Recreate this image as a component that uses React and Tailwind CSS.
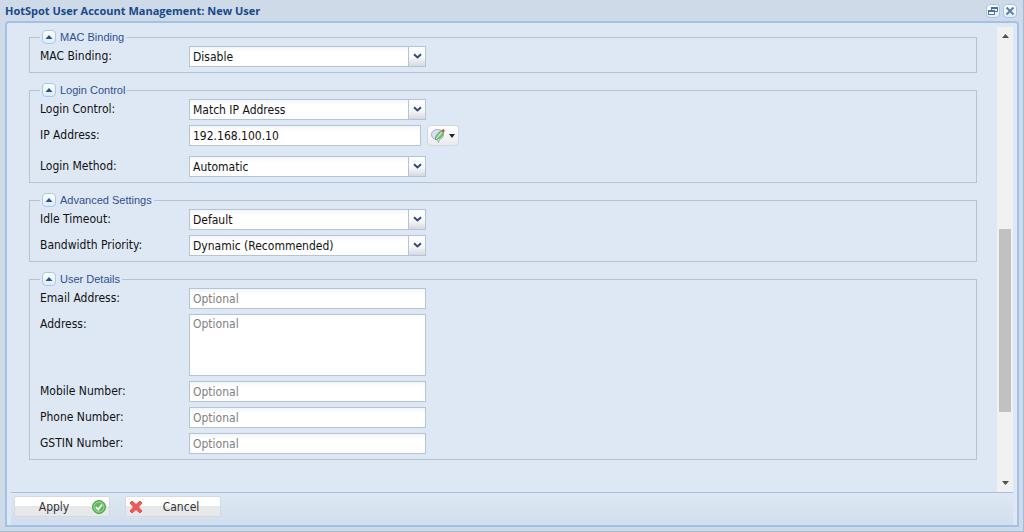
import React from "react";

const SECTION_OPTIONS = {
  binding: ["Disable", "Enable"],
  control: ["Match IP Address", "Any"],
  method: ["Automatic", "Manual"],
  timeout: ["Default", "Custom"],
  priority: ["Dynamic (Recommended)", "High", "Low"],
};

const fieldClass =
  "block h-[21px] border border-[#b5c3d8] bg-white bg-gradient-to-b from-[#f3f6f8] to-white to-30% px-[3px] pt-px text-xs leading-4 text-[#111] placeholder:text-[#808080] outline-none focus:border-[#7eadd9]";

const Section = ({ title, children }) => {
  const [open, setOpen] = React.useState(true);

  return (
    <fieldset className="min-w-0 border border-[#b5c3d4] px-[10px] pb-[5px]">
      <legend className="flex h-[14px] items-center gap-1 px-[2px] font-['Liberation_Sans',Arial,sans-serif] text-[11px] leading-[14px] text-[#2f4f94]">
        <button
          type="button"
          aria-expanded={open}
          aria-label={`Toggle ${title}`}
          onClick={() => setOpen((value) => !value)}
          className="flex h-[14px] w-[14px] items-center justify-center rounded-sm border border-[#a9c9ea] bg-gradient-to-b from-white to-[#dcebfa]"
        >
          <svg className={`h-1 w-2 ${open ? "" : "rotate-180"}`} viewBox="0 0 8 4">
            <path d="M4 0 7.5 4h-7z" fill="#28508c" />
          </svg>
        </button>
        {title}
      </legend>
      {open && <div className="flex flex-col gap-[5px] pt-[2px]">{children}</div>}
    </fieldset>
  );
};

const Row = ({ id, label, children }) => (
  <div className="flex items-start">
    <label htmlFor={id} className="w-[149px] shrink-0 pt-[2px] text-xs leading-4 text-[#111]">
      {label}:
    </label>
    {children}
  </div>
);

const SelectRow = ({ id, label, options }) => (
  <Row id={id} label={label}>
    <div className="relative w-[237px]">
      <select id={id} className={`${fieldClass} w-full appearance-none pr-5`}>
        {options.map((option) => (
          <option key={option}>{option}</option>
        ))}
      </select>
      <span className="pointer-events-none absolute inset-y-0 right-0 flex w-[18px] justify-center border border-[#b5c3d8] bg-gradient-to-b from-[#fbfcfd] from-50% to-[#d5dae0] pt-[6px]">
        <svg className="h-[6px] w-[9px]" viewBox="0 0 9 6">
          <path d="M1 1.2 4.5 4.4 8 1.2" fill="none" stroke="#2f4a78" strokeWidth="2" />
        </svg>
      </span>
    </div>
  </Row>
);

const TextRow = ({ id, label }) => (
  <Row id={id} label={label}>
    <input id={id} type="text" placeholder="Optional" className={`${fieldClass} w-[237px]`} />
  </Row>
);

const toolClass =
  "flex h-[14px] w-[14px] items-center justify-center rounded-sm border border-[#a9c5e6] bg-gradient-to-b from-white to-[#e3eefa]";

const footerButtonClass =
  "flex h-[21px] w-24 items-center rounded-xs border border-[#d4dae2] bg-linear-to-b from-white from-50% to-[#e6e8ea] to-50% px-[2px] text-xs leading-4 text-[#333]";

const App = () => {
  const scrollRef = React.useRef(null);

  const scrollBy = (top) => scrollRef.current?.scrollBy({ top });

  return (
    <div className="flex min-h-screen flex-col border-r border-b border-[#a3bbdb] bg-[#cedae8] pr-1 pb-1 pl-[5px] font-['DejaVu_Sans_Condensed','DejaVu_Sans',sans-serif]">
      <header className="flex h-[21px] items-center justify-between pr-[2px]">
        <h1 className="font-['Open_Sans',sans-serif] text-[11px] leading-4 font-bold text-[#15498b]">
          HotSpot User Account Management: New User
        </h1>
        <div className="flex gap-[3px]">
          <button type="button" aria-label="Restore" className={toolClass}>
            <svg className="h-3 w-3" viewBox="0 0 12 12" fill="none" stroke="#4672ab">
              <path d="M4.5 5V2.5h6v4H8" />
              <path d="M4 3h7" strokeWidth="2" />
              <path d="M1.500 5.500h6v4h-6z" fill="#fff" />
              <path d="M1 6h7" strokeWidth="2" />
            </svg>
          </button>
          <button type="button" aria-label="Close" className={toolClass}>
            <svg className="h-[10px] w-[10px]" viewBox="0 0 10 10">
              <path d="M1.5 1.5l7 7M8.5 1.5l-7 7" stroke="#5a7fb2" strokeWidth="2" />
            </svg>
          </button>
        </div>
      </header>

      <main className="flex flex-1 flex-col rounded-t-sm border-2 border-[#a3c0e6] bg-[#dee8f4] px-1 pt-1">
        <div className="flex flex-1">
          <div ref={scrollRef} className="flex flex-1 flex-col gap-[10px] pt-[3px] pr-5 pl-[18px]">
            <Section title="MAC Binding">
              <SelectRow id="mac-binding" label="MAC Binding" options={SECTION_OPTIONS.binding} />
            </Section>

            <Section title="Login Control">
              <SelectRow id="login-control" label="Login Control" options={SECTION_OPTIONS.control} />
              <Row id="ip-address" label="IP Address">
                <input
                  id="ip-address"
                  type="text"
                  defaultValue="192.168.100.10"
                  className={`${fieldClass} mb-[5px] w-[232px]`}
                />
                <button
                  type="button"
                  aria-label="IP address options"
                  className="ml-[6px] flex h-[21px] w-8 items-center justify-center gap-[3px] rounded-sm border border-[#d3d8df] bg-gradient-to-b from-white to-[#ebebed] pr-[2px]"
                >
                  <svg className="h-4 w-4" viewBox="0 0 16 16">
                    <path
                      d="M7.500 1.500C11 1.500 13.500 3.500 13.500 6.500S11.500 11 9.500 11.300L8.500 14.500 6.500 11.300C3.500 11 1.500 9.300 1.500 6.500S4 1.500 7.500 1.500z"
                      fill="#dcdff2"
                      stroke="#a3a8c8"
                    />
                    <path d="M5.500 11.500C5.500 8 7.500 5 12 2.500l1.500 1.500C13 8 10 10.500 5.500 11.500z" fill="#7fce78" stroke="#4d9d58" />
                    <path d="M6 11 12 4" stroke="#e4f6df" />
                    <path d="M11.500 2.500 13.500 1l1.500 1.500-1.500 2z" fill="#d8503f" />
                  </svg>
                  <svg className="h-1 w-[6px]" viewBox="0 0 6 4">
                    <path d="M0 0h6L3 4z" fill="#222" />
                  </svg>
                </button>
              </Row>
              <SelectRow id="login-method" label="Login Method" options={SECTION_OPTIONS.method} />
            </Section>

            <Section title="Advanced Settings">
              <SelectRow id="idle-timeout" label="Idle Timeout" options={SECTION_OPTIONS.timeout} />
              <SelectRow id="priority" label="Bandwidth Priority" options={SECTION_OPTIONS.priority} />
            </Section>

            <Section title="User Details">
              <TextRow id="email" label="Email Address" />
              <Row id="address" label="Address">
                <textarea
                  id="address"
                  placeholder="Optional"
                  className="block h-[62px] w-[237px] resize-none border border-[#b5c3d8] bg-white px-[3px] pt-px text-xs leading-4 text-[#111] outline-none placeholder:text-[#808080]"
                />
              </Row>
              <TextRow id="mobile" label="Mobile Number" />
              <TextRow id="phone" label="Phone Number" />
              <TextRow id="gstin" label="GSTIN Number" />
            </Section>
          </div>

          <div className="flex w-4 flex-col items-center bg-[#f1f1f1]">
            <button
              type="button"
              aria-label="Scroll up"
              onClick={() => scrollBy(-40)}
              className="flex h-[18px] w-4 items-center justify-center"
            >
              <svg className="h-1 w-[7px]" viewBox="0 0 7 4">
                <path d="M3.500 0 7 4H0z" fill="#505050" />
              </svg>
            </button>
            <div className="flex w-3 flex-1 flex-col">
              <div className="grow-[184]" />
              <div className="grow-[182] bg-[#c1c1c1]" />
              <div className="grow-[62]" />
            </div>
            <button
              type="button"
              aria-label="Scroll down"
              onClick={() => scrollBy(40)}
              className="flex h-[18px] w-4 items-center justify-center"
            >
              <svg className="h-1 w-[7px]" viewBox="0 0 7 4">
                <path d="M0 0h7L3.500 4z" fill="#505050" />
              </svg>
            </button>
          </div>
        </div>

        <footer className="flex h-[33px] items-start gap-[15px] border-t border-[#a9bfdd] bg-gradient-to-b from-[#dfe8f4] to-[#d1deed] pt-[3px] pl-[3px]">
          <button type="button" className={footerButtonClass}>
            <span className="flex-1 text-center">Apply</span>
            <svg className="h-4 w-4" viewBox="0 0 16 16">
              <circle cx="8" cy="8" r="6.500" fill="#5db95a" stroke="#4f9f52" />
              <circle cx="8" cy="8" r="5" fill="none" stroke="#a5dba0" />
              <path d="M5 8l2.200 2.500L11 5.500" fill="none" stroke="#fff" strokeWidth="1.800" />
            </svg>
          </button>
          <button type="button" className={footerButtonClass}>
            <svg className="h-4 w-4" viewBox="0 0 16 16">
              <path
                d="M4 2 8 5.500 12 2l2 2-3.500 4 3.500 4-2 2-4-3.500L4 14l-2-2 3.500-4L2 4z"
                fill="#ee5a58"
                stroke="#e25050"
                strokeLinejoin="round"
              />
            </svg>
            <span className="flex-1 text-center">Cancel</span>
          </button>
        </footer>
      </main>
    </div>
  );
};

export default App;
